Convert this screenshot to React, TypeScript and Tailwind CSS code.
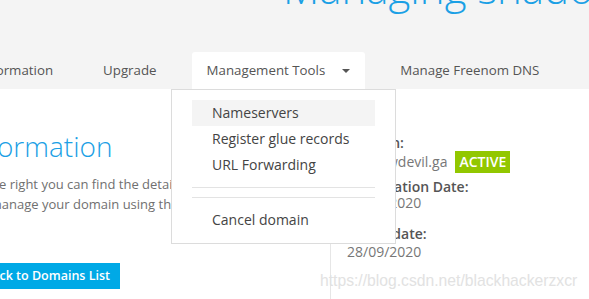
export default function App() {
  return (
    <div className="relative w-[589px] h-[299px] overflow-hidden bg-white font-['Open_Sans',sans-serif]">
      {/* header */}
      <div className="flex h-[89px] flex-col bg-[#f4f4f4]">
        <div className="-mt-[33px] pl-[283px] text-[42px] leading-none font-light text-[#1ba0e5] whitespace-nowrap">
          Managing shadowdevil.ga
        </div>
        <nav className="mt-[43px] -ml-[88px] flex h-[37px] items-center gap-[20px] text-[13.3px] text-[#555] whitespace-nowrap">
          <div className="flex h-full items-center px-[15px]">Domain Information</div>
          <div className="flex h-full items-center px-[15px]">Upgrade</div>
          <div className="flex h-full items-center rounded-t-[3px] bg-white px-[15px]">
            Management Tools
            <span className="ml-[17px] h-0 w-0 border-x-[4px] border-t-[4px] border-x-transparent border-t-[#555]" />
          </div>
          <div className="flex h-full items-center px-[15px]">Manage Freenom DNS</div>
        </nav>
      </div>

      {/* content */}
      <div className="flex h-[210px]">
        <div className="-ml-[36px] w-[366px] shrink-0 whitespace-nowrap">
          <h1 className="-ml-[105px] mt-[43px] text-[28px] leading-none font-light text-[#1ba0e5]">
            Domain Information
          </h1>
          <p className="ml-[1px] mt-[14px] text-[13px] leading-[20px] text-[#707070]">
            On the right you can find the details of your domain and you
            <br />
            can manage your domain using the tools in the menu above.
          </p>
          <button className="ml-[10px] mt-[49px] h-[26px] bg-[#00a9e6] px-[10px] text-[12.5px] leading-[26px] font-semibold text-white">
            Back to Domains List
          </button>
        </div>

        <div className="flex-1 border-l border-[#e6e6e6] pl-[16px] pt-[46px] text-[14px] whitespace-nowrap">
          <div className="leading-[16px] font-semibold text-[#555]">Domain:</div>
          <div className="flex h-[22px] items-center leading-[18px] text-[#777]">
            shadowdevil.ga
            <span className="ml-[8px] flex h-[22px] items-center bg-[#92c700] px-[4px] font-semibold text-white">
              ACTIVE
            </span>
          </div>
          <div className="mt-[6px] leading-[16px] font-semibold text-[#555]">Registration Date:</div>
          <div className="leading-[16px] text-[#777]">28/06/2020</div>
          <div className="mt-[15px] leading-[16px] font-semibold text-[#555]">Expiry date:</div>
          <div className="mt-[2px] leading-[16px] text-[#777]">28/09/2020</div>
        </div>
      </div>

      {/* dropdown menu */}
      <div className="absolute left-[171px] top-[89px] w-[225px] border border-[#dcdcdc] bg-white pt-[10px] pb-[10px] px-[20px] text-[14px] text-[#444]">
        <div className="h-[26px] bg-[#f4f4f4] px-[20px] leading-[26px]">Nameservers</div>
        <div className="h-[26px] px-[20px] leading-[26px]">Register glue records</div>
        <div className="h-[26px] px-[20px] leading-[26px]">URL Forwarding</div>
        <div className="my-[9px] h-[11px] border-y border-[#e3e3e3]" />
        <div className="h-[26px] px-[20px] leading-[26px]">Cancel domain</div>
      </div>

      {/* watermark */}
      <div className="absolute left-[320px] top-[273px] font-['Liberation_Sans',sans-serif] text-[15.7px] leading-none text-[#e2e2e2] whitespace-nowrap">
        https://blog.csdn.net/blackhackerzxcr
      </div>
    </div>
  );
}
